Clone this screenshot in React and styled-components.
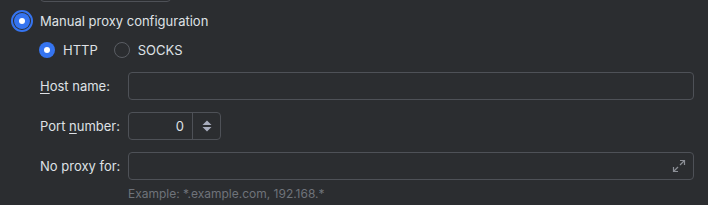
import React from "react";
import styled, { createGlobalStyle } from "styled-components";

const Global = createGlobalStyle`
  html, body { margin: 0; padding: 0; background: #2b2d30; }
  body { font-family: Inter, "Noto Sans", sans-serif; font-size: 13px; color: #dfe1e5; }
`;

const Page = styled.div`
  width: 708px;
  height: 205px;
  overflow: hidden;
  background: #2b2d30;
  display: flex;
  flex-direction: column;
`;

const ClippedBox = styled.div`
  margin: -26px 0 0 40px;
  width: 129px;
  height: 26px;
  border: 1px solid #4e5157;
  border-radius: 4px;
`;

const RadioRow = styled.label`
  display: flex;
  align-items: center;
  gap: ${(p) => p.$gap || 8}px;
  height: ${(p) => p.$h || 16}px;
  white-space: nowrap;
`;

const MainRow = styled.div`
  display: flex;
  align-items: center;
  height: 22px;
  margin-top: 8px;
  padding-left: 11px;
  gap: 7px;
`;

const FocusRing = styled.span`
  width: 22px;
  height: 22px;
  box-sizing: border-box;
  border-radius: 50%;
  border: 2px solid #3574f0;
  display: flex;
  align-items: center;
  justify-content: center;
`;

const RadioDot = styled.span`
  width: 16px;
  height: 16px;
  box-sizing: border-box;
  border-radius: 50%;
  display: flex;
  align-items: center;
  justify-content: center;
  background: ${(p) => (p.$on ? "#3574f0" : "transparent")};
  border: ${(p) => (p.$on ? "none" : "1px solid #5a5d63")};
  &::after {
    content: "";
    display: ${(p) => (p.$on ? "block" : "none")};
    width: 6px;
    height: 6px;
    border-radius: 50%;
    background: #ffffff;
  }
`;

const TypeRow = styled.div`
  display: flex;
  align-items: center;
  margin-top: 10px;
  padding-left: 39px;
  gap: 16px;
  height: 16px;
`;

const Form = styled.div`
  display: grid;
  grid-template-columns: 88px 1fr;
  row-gap: 12px;
  margin: 14px 14px 0 40px;
  align-items: center;
`;

const Label = styled.span`
  white-space: nowrap;
  color: #dfe1e5;
  u { text-decoration: underline; text-underline-offset: 2px; }
`;

const Field = styled.div`
  height: 28px;
  box-sizing: border-box;
  border: 1px solid #4e5157;
  border-radius: 4px;
  background: #2b2d30;
  display: flex;
  align-items: center;
  width: ${(p) => p.$w || "auto"};
`;

const NumberValue = styled.span`
  flex: 1;
  text-align: right;
  padding-right: 8px;
  color: #dfe1e5;
`;

const Spinner = styled.div`
  width: 27px;
  height: 100%;
  border-left: 1px solid #4e5157;
  display: flex;
  align-items: center;
  justify-content: center;
`;

const ExpandBtn = styled.div`
  margin-left: auto;
  margin-right: 7px;
  display: flex;
  align-items: center;
`;

const Hint = styled.div`
  grid-column: 2;
  margin-top: -6px;
  font-size: 12px;
  color: #6f737a;
  line-height: 16px;
`;

export default function App() {
  return (
    <Page>
      <Global />
      <ClippedBox />
      <MainRow>
        <FocusRing>
          <RadioDot $on />
        </FocusRing>
        <span>Manual proxy configuration</span>
      </MainRow>
      <TypeRow>
        <RadioRow>
          <RadioDot $on />
          <span>HTTP</span>
        </RadioRow>
        <RadioRow>
          <RadioDot />
          <span>SOCKS</span>
        </RadioRow>
      </TypeRow>
      <Form>
        <Label>
          <u>H</u>ost name:
        </Label>
        <Field />
        <Label>
          Port <u>n</u>umber:
        </Label>
        <Field $w="93px">
          <NumberValue>0</NumberValue>
          <Spinner>
            <svg width="10" height="12" viewBox="0 0 10 12">
              <path d="M5 0.5 L9.5 5 L0.5 5 Z" fill="#a8adbd" />
              <path d="M0.5 7 L9.5 7 L5 11.5 Z" fill="#a8adbd" />
            </svg>
          </Spinner>
        </Field>
        <Label>No proxy for:</Label>
        <Field>
          <ExpandBtn>
            <svg width="14" height="14" viewBox="0 0 14 14" fill="none" stroke="#8c8f96" strokeWidth="1.2">
              <path d="M8 1.5 H12.5 V6" />
              <path d="M12.5 1.5 L8 6" />
              <path d="M6 12.5 H1.5 V8" />
              <path d="M1.5 12.5 L6 8" />
            </svg>
          </ExpandBtn>
        </Field>
        <Hint>Example: *.example.com, 192.168.*</Hint>
      </Form>
    </Page>
  );
}
